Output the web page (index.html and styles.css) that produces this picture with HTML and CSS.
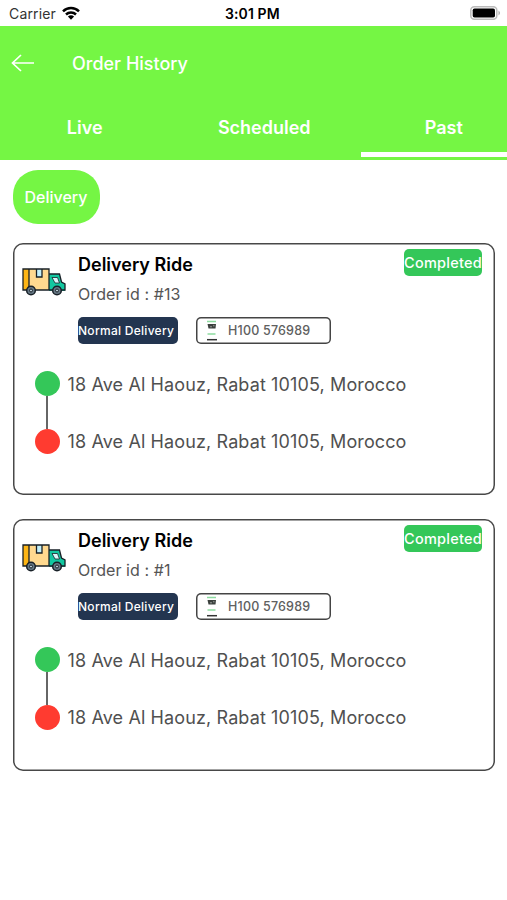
FILE: index.html
```html
<!DOCTYPE html>
<html lang="en">
<head>
<meta charset="utf-8">
<title>Order History</title>
<link rel="stylesheet" href="styles.css">
</head>
<body>
<svg class="defs" aria-hidden="true">
  <symbol id="truck" viewBox="0 0 44 30">
    <path d="M1 2h26v21H1z" fill="#ffd98f"/>
    <path d="M1 2h6v21H1z" fill="#fdb515"/>
    <path d="M14.500 2h5.500v8h-5.500z" fill="#c3effa"/>
    <path d="M27 7h10.500l2 8 3.500 2v7H27z" fill="#12c7a0"/>
    <path d="M30 10.500h5.500l2 5.500H33z" fill="#d9f7fa"/>
    <path d="M1 2h26v21H1zM7 2v21M14.500 2v8H20V2M27 7h10.500l2 8 3.500 2v6H27z" fill="none" stroke="#182027" stroke-width="1.300"/>
    <path d="M30 10.500h5.500l2 5.500H33z" fill="none" stroke="#182027" stroke-width=".8"/>
    <circle cx="9" cy="23.500" r="4.300" fill="#667885" stroke="#182027" stroke-width="1.500"/>
    <circle cx="9" cy="23.500" r="1.500" fill="#b9cbd5" stroke="#182027"/>
    <circle cx="35" cy="23.500" r="4.300" fill="#667885" stroke="#182027" stroke-width="1.500"/>
    <circle cx="35" cy="23.500" r="1.500" fill="#b9cbd5" stroke="#182027"/>
  </symbol>
  <symbol id="plate" viewBox="0 0 12 22">
    <path d="M1 1.500h9M1.500 14h8" stroke="#8ddba0" stroke-width="1.300"/>
    <path d="M1.500 4h8.500l-.5 4.500h-7z" fill="#3b403d"/>
    <path d="M4 6.800h2M7 5.800h1.500" stroke="#b5bab6" stroke-width=".8"/>
    <path d="M1 19.700h10" stroke="#333" stroke-width="1.500"/>
  </symbol>
</svg>
<div class="status">
  <span class="carrier">Carrier</span>
  <svg class="wifi" viewBox="0 0 18 14"><g fill="none" stroke="#000" stroke-width="2.500"><path d="M1 5.300a11.500 11.500 0 0 1 16 0"/><path d="M4 8.500a7.200 7.200 0 0 1 10 0"/></g><path d="M9 13.800 5.900 10.600a4.500 4.500 0 0 1 6.200 0z"/></svg>
  <span class="time">3:01 PM</span>
  <svg class="battery" viewBox="0 0 31 14"><rect x=".8" y=".8" width="26" height="12.400" rx="3.500" fill="#fff" stroke="#bbb" stroke-width="1.500"/><rect x="2.700" y="2.500" width="22.300" height="9" rx="1.800"/><path d="M28.500 4.500q3 2.500 0 5z" fill="#aaa"/></svg>
</div>
<header class="header">
  <div class="bar">
    <svg class="back" viewBox="0 0 24 18"><path d="M23 9H1.500M10 1 1.500 9l8.500 8" fill="none" stroke="#fff" stroke-width="1.700"/></svg>
    <h1 class="title">Order History</h1>
  </div>
  <nav class="tabs">
    <div class="tab">Live</div>
    <div class="tab">Scheduled</div>
    <div class="tab active">Past</div>
  </nav>
</header>
<main class="content">
  <button class="filter">Delivery</button>
  <article class="card">
    <div class="top">
      <svg class="truck"><use href="#truck"/></svg>
      <div class="info">
        <h2 class="name">Delivery Ride</h2>
        <p class="order">Order id : #13</p>
        <div class="tags"><span class="kind">Normal Delivery</span><span class="vehicle"><svg class="plate"><use href="#plate"/></svg><span>H100 576989</span></span></div>
      </div>
      <span class="state">Completed</span>
    </div>
    <div class="route">
      <div class="stop"><i class="dot from"></i><span>18 Ave Al Haouz, Rabat 10105, Morocco</span></div>
      <div class="link"></div>
      <div class="stop"><i class="dot to"></i><span>18 Ave Al Haouz, Rabat 10105, Morocco</span></div>
    </div>
  </article>
  <article class="card">
    <div class="top">
      <svg class="truck"><use href="#truck"/></svg>
      <div class="info">
        <h2 class="name">Delivery Ride</h2>
        <p class="order">Order id : #1</p>
        <div class="tags"><span class="kind">Normal Delivery</span><span class="vehicle"><svg class="plate"><use href="#plate"/></svg><span>H100 576989</span></span></div>
      </div>
      <span class="state">Completed</span>
    </div>
    <div class="route">
      <div class="stop"><i class="dot from"></i><span>18 Ave Al Haouz, Rabat 10105, Morocco</span></div>
      <div class="link"></div>
      <div class="stop"><i class="dot to"></i><span>18 Ave Al Haouz, Rabat 10105, Morocco</span></div>
    </div>
  </article>
</main>
</body>
</html>
```
FILE: styles.css
```css
* { box-sizing: border-box; }
body { margin: 0; background: #fff; font-family: Inter, Roboto, sans-serif; overflow: hidden; white-space: nowrap; }
h1, h2, p { margin: 0; }
.defs { display: none; }
.status { height: 25.500px; display: grid; grid-template-columns: 53px 18px 1fr 31px; padding: 0 6px 0 9px; align-items: center; }
.carrier { font-size: 14px; color: #333; padding-top: 2px; letter-spacing: .15px; }
.wifi { width: 18px; height: 14px; }
.time { font-size: 14px; font-weight: 600; padding-top: 2px; padding-left: 145px; letter-spacing: .1px; }
.battery { width: 31px; height: 14px; }
.header { height: 134px; background: #75f644; color: #fff; overflow: hidden; }
.bar { height: 74px; display: flex; align-items: center; padding-left: 11px; }
.back { width: 24px; height: 18px; margin-right: 37px; }
.title { font-size: 18px; font-weight: 500; padding-top: 1px; }
.tabs { display: grid; grid-template-columns: repeat(3, 179.500px); margin-left: -5px; height: 59px; }
.tab { text-align: center; font-size: 18px; font-weight: 600; line-height: 56px; height: 58px; }
.active { background: linear-gradient(#fff, #fff) 7px 52.500px / 174px 5px no-repeat; }
.content { padding: 10.500px 12.500px; }
.filter { display: block; width: 87px; height: 54px; border: 0; border-radius: 25px; background: #75f644; color: #fff; font: 500 16px Inter, sans-serif; padding: 0; margin-bottom: 18.500px; }
.card { height: 252px; box-shadow: inset 0 0 0 1.500px #484848; padding: 1.500px; border-radius: 10px; margin-bottom: 24px; }
.top { display: flex; align-items: flex-start; padding: 5px 11px 0 8px; }
.truck { width: 44px; height: 30px; margin-top: 18px; }
.info { margin-left: 12px; flex: 1; }
.name { font-size: 18px; font-weight: 600; line-height: 30px; color: #000; padding-top: 1px; }
.order { font-size: 16px; line-height: 30px; color: #555; letter-spacing: .08px; margin-top: -1px; }
.tags { display: flex; gap: 18px; margin-top: 8px; }
.kind { width: 100px; height: 27px; border-radius: 5px; background: #233550; color: #fff; font-size: 12px; font-weight: 500; line-height: 28px; letter-spacing: .28px; }
.vehicle { width: 135px; height: 27px; box-shadow: inset 0 0 0 1.500px #444; border-radius: 5px; display: flex; align-items: center; font-size: 12.500px; font-weight: 500; color: #606060; padding-left: 10px; letter-spacing: .2px; }
.plate { width: 12px; height: 22px; margin-right: 10px; }
.state { width: 78px; height: 27px; border-radius: 5px; background: #34c759; color: #fff; font-size: 14.500px; font-weight: 500; line-height: 27px; letter-spacing: .25px; }
.route { padding: 27px 0 0 21px; }
.stop { display: flex; align-items: center; height: 25px; gap: 7.500px; font-size: 18px; color: #505050; letter-spacing: .12px; }
.stop span { padding-top: 1px; }
.dot { width: 25px; height: 25px; border-radius: 50%; }
.from { background: #34c759; }
.to { background: #ff3b30; }
.link { width: 2px; height: 32.500px; margin-left: 10.500px; background: #666; }
```
